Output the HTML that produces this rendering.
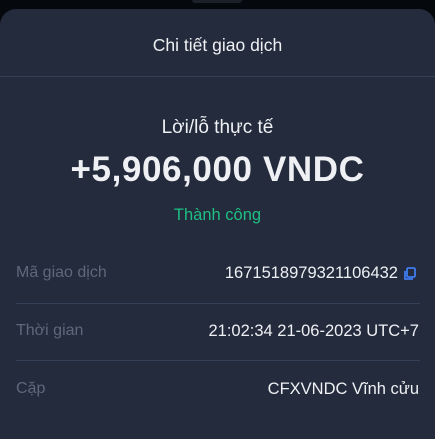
<!DOCTYPE html>
<html><head><meta charset="utf-8"><style>
html,body{margin:0;padding:0;width:435px;height:429px;overflow:hidden;background:#05080d;font-family:"Liberation Sans",sans-serif;}
.notch{position:absolute;left:192px;top:0;width:50px;height:3px;background:#1c2129;border-radius:0 0 4px 4px;}
.sheet{position:absolute;left:0;top:9px;width:435px;height:430px;background:#232b3c;border-radius:16px 16px 0 0;}
.t{position:absolute;width:100%;text-align:center;color:#eef0f4;}
.hr{position:absolute;height:1px;background:#344055;}
.lab{position:absolute;left:16px;color:#5f687a;font-size:16px;}
.val{position:absolute;right:16px;color:#eef0f4;font-size:16.5px;}
</style></head><body>
<div class="notch"></div>
<div class="sheet"></div>
<div class="t" style="top:35px;font-size:17.5px;">Chi tiết giao dịch</div>
<div class="hr" style="left:0;width:435px;top:76px;"></div>
<div class="t" style="top:117px;font-size:19px;">Lời/lỗ thực tế</div>
<div class="t" style="top:150px;font-size:35px;font-weight:bold;letter-spacing:0.6px;">+5,906,000 VNDC</div>
<div class="t" style="top:206px;font-size:16.5px;color:#1fbf83;">Thành công</div>
<div class="lab" style="top:264px;">Mã giao dịch</div>
<div class="val" style="top:264px;right:37px;">1671518979321106432</div>
<svg style="position:absolute;left:403px;top:267px" width="14" height="14" viewBox="0 0 14 14"><rect x="4" y="1" width="8" height="9" rx="1.2" fill="none" stroke="#3f7df0" stroke-width="1.8"/><path d="M2 4v8h8" fill="none" stroke="#3f7df0" stroke-width="1.8"/></svg>
<div class="hr" style="left:16px;width:404px;top:303px;"></div>
<div class="lab" style="top:322px;">Thời gian</div>
<div class="val" style="top:322px;">21:02:34 21-06-2023 UTC+7</div>
<div class="hr" style="left:16px;width:404px;top:360px;"></div>
<div class="lab" style="top:380px;">Cặp</div>
<div class="val" style="top:380px;">CFXVNDC Vĩnh cửu</div>
</body></html>
